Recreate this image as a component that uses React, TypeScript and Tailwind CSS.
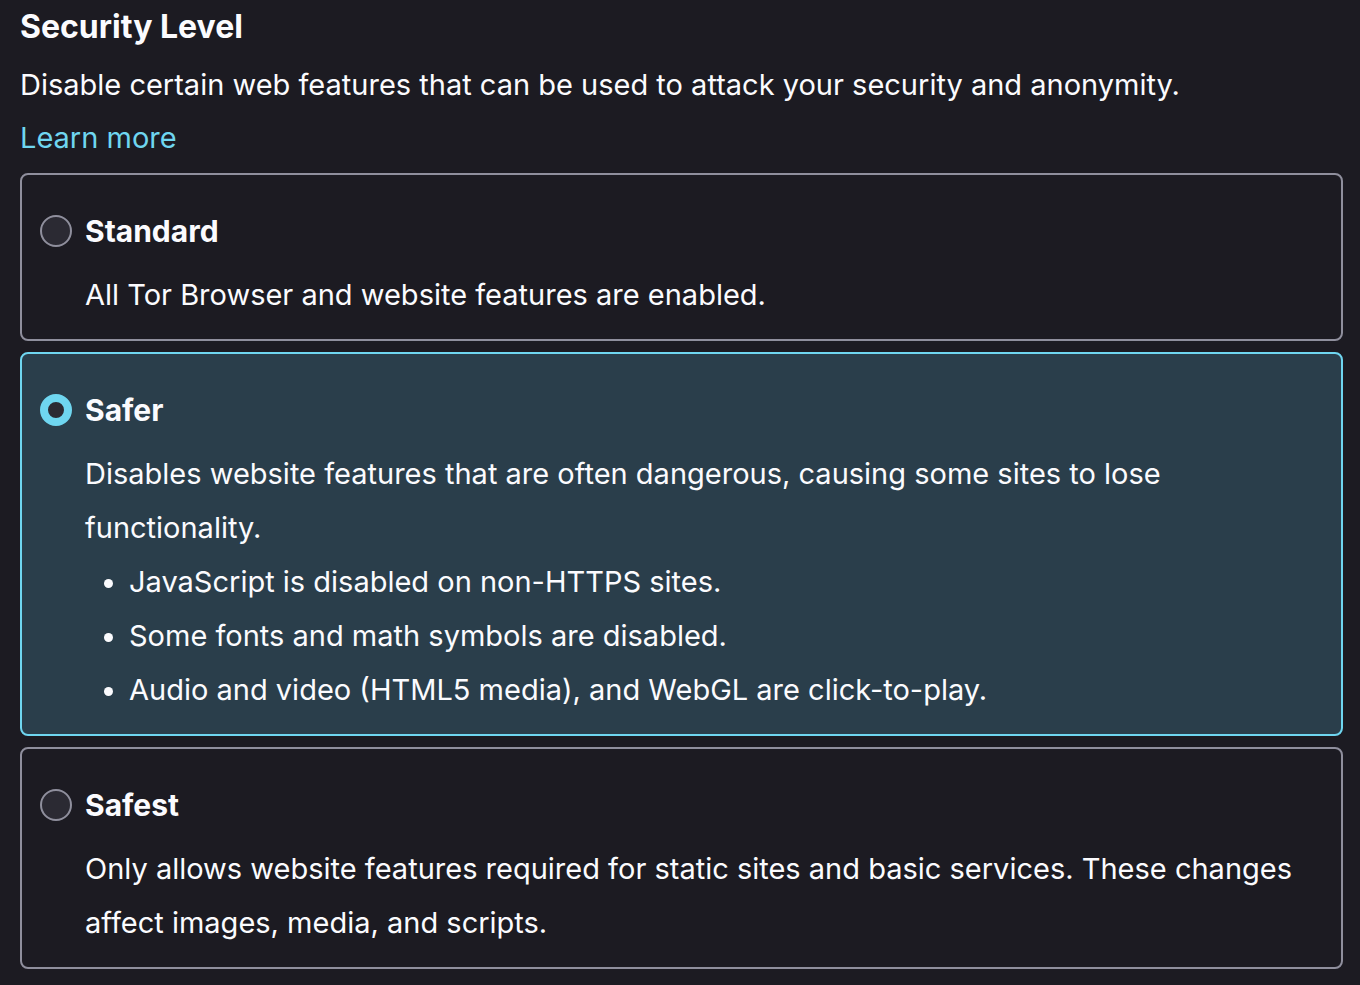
import React from 'react';

type Level = {
  id: string;
  label: string;
  description: string;
  bullets?: string[];
};

const levels: Level[] = [
  { id: 'standard', label: 'Standard', description: 'All Tor Browser and website features are enabled.' },
  {
    id: 'safer',
    label: 'Safer',
    description: 'Disables website features that are often dangerous, causing some sites to lose functionality.',
    bullets: [
      'JavaScript is disabled on non-HTTPS sites.',
      'Some fonts and math symbols are disabled.',
      'Audio and video (HTML5 media), and WebGL are click-to-play.',
    ],
  },
  {
    id: 'safest',
    label: 'Safest',
    description:
      'Only allows website features required for static sites and basic services. These changes affect images, media, and scripts.',
  },
];

const Radio: React.FC<{ checked: boolean }> = ({ checked }) =>
  checked ? (
    <span className="w-8 h-8 shrink-0 rounded-full border-[8px] border-[#6fd6f0] bg-[#2b2a33]" />
  ) : (
    <span className="w-8 h-8 shrink-0 rounded-full border-2 border-[#8f8f9d] bg-[#2b2a33]" />
  );

export default function App() {
  const [selected, setSelected] = React.useState('safer');

  return (
    <div
      className="min-h-[985px] bg-[#1c1b22] text-[#fbfbfe] pl-5 pr-[17px] pt-[7px]"
      style={{ fontFamily: 'Inter, "Noto Sans", sans-serif' }}
    >
      <h1 className="text-[32px] leading-10 font-bold">Security Level</h1>
      <p className="text-[29px] leading-[54px] mt-[11px]">
        Disable certain web features that can be used to attack your security and anonymity.
      </p>
      <a href="#" className="block w-fit text-[29px] leading-[54px] text-[#6fd6f0] -mt-px">
        Learn more
      </a>

      <div className="flex flex-col gap-[11px] mt-2">
        {levels.map((lvl) => {
          const checked = selected === lvl.id;
          return (
            <div
              key={lvl.id}
              onClick={() => setSelected(lvl.id)}
              className={
                checked
                  ? 'rounded-lg border-2 border-[#6fd6f0] bg-[#2a3e4b] pl-[18px] pr-5 pt-9 pb-[17px]'
                  : 'rounded-lg border-2 border-[#8f8f9d] bg-[#1c1b22] pl-[18px] pr-5 pt-9 pb-[17px]'
              }
            >
              <div className="flex items-center gap-[13px] h-10">
                <Radio checked={checked} />
                <span className="text-[30px] font-bold">{lvl.label}</span>
              </div>
              <div className="ml-[45px] mt-[17px] text-[29px] leading-[54px]">
                <p>{lvl.description}</p>
                {lvl.bullets && (
                  <ul className="list-disc pl-[44px]">
                    {lvl.bullets.map((b) => (
                      <li key={b}>{b}</li>
                    ))}
                  </ul>
                )}
              </div>
            </div>
          );
        })}
      </div>
    </div>
  );
}
